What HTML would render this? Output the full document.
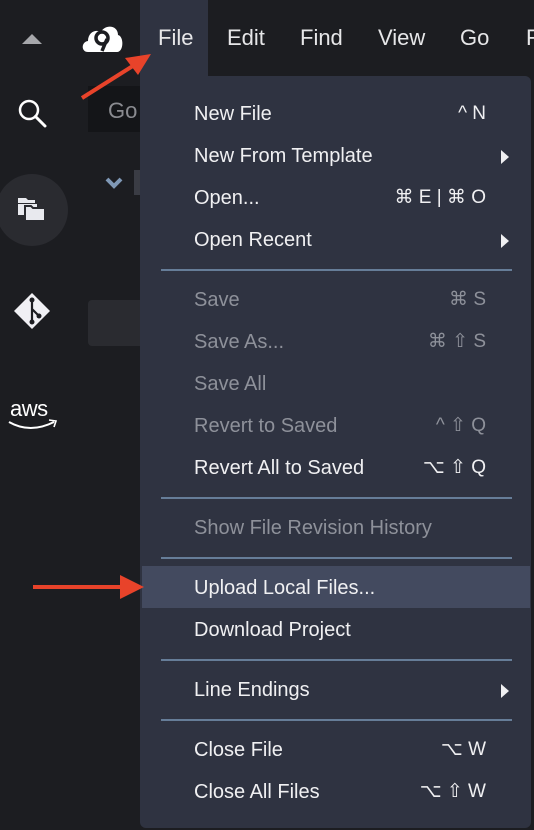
<!DOCTYPE html>
<html><head><meta charset="utf-8"><style>
*{margin:0;padding:0;box-sizing:border-box}
body{width:534px;height:830px;background:#1c1d21;position:relative;overflow:hidden;font-family:"Liberation Sans",Arial,sans-serif}
.mb{position:absolute;top:0;font-size:22px;color:#e6e6e8;line-height:76px;font-weight:300}
.fileh{position:absolute;left:140px;top:0;width:68px;height:78px;background:#2f3341}
.menu{position:absolute;left:140px;top:76px;width:391px;height:752px;background:#2f3341;border-radius:0 6px 6px 6px}
.it{position:absolute;left:54px;font-size:20px;color:#f0f0f2;line-height:42px;height:42px;white-space:nowrap}
.dis{color:#8e919a}
.sc{position:absolute;right:45px;font-size:19px;color:#f0f0f2;line-height:42px;white-space:nowrap}
.sc.dis{color:#8e919a}
.sep{position:absolute;left:21px;width:351px;height:2px;background:#667d98}
.arr{position:absolute;right:22px;width:0;height:0;border-top:7px solid transparent;border-bottom:7px solid transparent;border-left:8px solid #f0f0f2}
.hl{position:absolute;left:2px;width:388px;height:42px;background:#434a5f}
</style></head><body>
<div style="position:absolute;left:88px;top:86px;width:60px;height:46px;background:#141518"></div>
<div style="position:absolute;left:108px;top:98px;font-size:22px;color:#8a8b90;font-weight:300">Go</div>
<svg style="position:absolute;left:105px;top:176px" width="18" height="14"><path d="M2 3 L9 10 L16 3" stroke="#7f98b6" stroke-width="4" fill="none"/></svg>
<div style="position:absolute;left:134px;top:170px;width:8px;height:25px;background:#3a3c44"></div>
<div style="position:absolute;left:88px;top:300px;width:60px;height:46px;background:#2a2b30;border-radius:4px"></div>
<svg style="position:absolute;left:20px;top:30px" width="24" height="16"><path d="M2 14 L12 4 L22 14Z" fill="#a6a7ab"/></svg>
<svg style="position:absolute;left:80px;top:22px" width="44" height="32"><path d="M8 30 C1 30 1 20 8 19 C8 10 16 7 21 10 C25 2 38 3 38 13 C44 14 44 30 37 30Z" fill="#fff"/><circle cx="22" cy="16" r="6" fill="none" stroke="#1c1d21" stroke-width="3.5"/><path d="M27 17 L22 29" stroke="#1c1d21" stroke-width="3.5"/></svg>
<svg style="position:absolute;left:16px;top:97px" width="34" height="34"><circle cx="13" cy="13" r="9" fill="none" stroke="#fff" stroke-width="2.5"/><path d="M19.5 19.5 L29 29" stroke="#fff" stroke-width="3" stroke-linecap="round"/></svg>
<div style="position:absolute;left:-4px;top:174px;width:72px;height:72px;border-radius:50%;background:#2a2b30"></div>
<svg style="position:absolute;left:17px;top:196px" width="30" height="28"><path d="M1 2 H9 L11 4 H18 V7 H1Z" fill="#e8e9ee"/><path d="M1 8 H20 V19 H1Z" fill="#e8e9ee"/><path d="M8 10 H14 L16 12 H28 V25 H8Z" fill="#e8e9ee" stroke="#2a2b30" stroke-width="2"/></svg>
<svg style="position:absolute;left:12px;top:292px" width="40" height="38"><path d="M20 1 L38 19 L20 37 L2 19Z" fill="#f0f0f4" stroke-linejoin="round"/><path d="M20 7 V30 M20 17 L27 24" stroke="#1c1d21" stroke-width="2.2"/><circle cx="20" cy="8" r="2.5" fill="#1c1d21"/><circle cx="20" cy="30" r="2.5" fill="#1c1d21"/><circle cx="27" cy="24" r="2.5" fill="#1c1d21"/></svg>
<div style="position:absolute;left:10px;top:396px;font-size:22px;color:#fff;letter-spacing:-0.5px">aws</div>
<svg style="position:absolute;left:8px;top:418px" width="50" height="16"><path d="M1 4 Q22 16 46 4" stroke="#fff" stroke-width="2" fill="none"/><path d="M41 2 L48 3 L46 9" stroke="#fff" stroke-width="1.6" fill="none"/></svg>
<div class="fileh"></div>
<div class="mb" style="left:158px">File</div>
<div class="mb" style="left:227px">Edit</div>
<div class="mb" style="left:300px">Find</div>
<div class="mb" style="left:378px">View</div>
<div class="mb" style="left:460px">Go</div>
<div class="mb" style="left:526px">F</div>
<div class="menu">
<div class="it" style="top:17px">New File</div><div class="sc" style="top:17px">^ N</div>
<div class="it" style="top:59px">New From Template</div><div class="arr" style="top:74px"></div>
<div class="it" style="top:101px">Open...</div><div class="sc" style="top:101px">⌘ E | ⌘ O</div>
<div class="it" style="top:143px">Open Recent</div><div class="arr" style="top:158px"></div>
<div class="sep" style="top:193px"></div>
<div class="it dis" style="top:203px">Save</div><div class="sc dis" style="top:203px">⌘ S</div>
<div class="it dis" style="top:245px">Save As...</div><div class="sc dis" style="top:245px">⌘ ⇧ S</div>
<div class="it dis" style="top:287px">Save All</div>
<div class="it dis" style="top:329px">Revert to Saved</div><div class="sc dis" style="top:329px">^ ⇧ Q</div>
<div class="it" style="top:371px">Revert All to Saved</div><div class="sc" style="top:371px">⌥ ⇧ Q</div>
<div class="sep" style="top:421px"></div>
<div class="it dis" style="top:431px">Show File Revision History</div>
<div class="sep" style="top:481px"></div>
<div class="hl" style="top:490px"></div>
<div class="it" style="top:491px">Upload Local Files...</div>
<div class="it" style="top:533px">Download Project</div>
<div class="sep" style="top:583px"></div>
<div class="it" style="top:593px">Line Endings</div><div class="arr" style="top:608px"></div>
<div class="sep" style="top:643px"></div>
<div class="it" style="top:653px">Close File</div><div class="sc" style="top:653px">⌥ W</div>
<div class="it" style="top:695px">Close All Files</div><div class="sc" style="top:695px">⌥ ⇧ W</div>
</div>
<svg style="position:absolute;left:0;top:0" width="534" height="830"><path d="M82 98 L136 64" stroke="#e8432a" stroke-width="4"/><path d="M151 54 L125 58 L138 75Z" fill="#e8432a"/><path d="M33 587 L122 587" stroke="#e8432a" stroke-width="4"/><path d="M144 587 L120 575 L120 599Z" fill="#e8432a"/></svg>
</body></html>
